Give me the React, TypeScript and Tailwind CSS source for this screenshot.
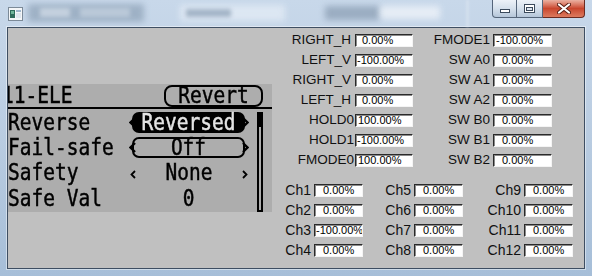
import React from "react";

type Row = { label: string; value: string; lp: string; vp: string };

const col1: Row[] = [
  { label: "RIGHT_H", value: "0.00%", lp: "pr-[3px]", vp: "pl-[6px]" },
  { label: "LEFT_V", value: "-100.00%", lp: "pr-[3px]", vp: "pl-[1px]" },
  { label: "RIGHT_V", value: "0.00%", lp: "pr-[3px]", vp: "pl-[6px]" },
  { label: "LEFT_H", value: "0.00%", lp: "pr-[3px]", vp: "pl-[6px]" },
  { label: "HOLD0", value: "100.00%", lp: "pr-0", vp: "pl-[2px]" },
  { label: "HOLD1", value: "-100.00%", lp: "pr-0", vp: "pl-[1px]" },
  { label: "FMODE0", value: "100.00%", lp: "pr-0", vp: "pl-[2px]" },
];

const col2: Row[] = [
  { label: "FMODE1", value: "-100.00%", lp: "pr-0", vp: "pl-[2px]" },
  { label: "SW A0", value: "0.00%", lp: "pr-0", vp: "pl-[8px]" },
  { label: "SW A1", value: "0.00%", lp: "pr-0", vp: "pl-[8px]" },
  { label: "SW A2", value: "0.00%", lp: "pr-0", vp: "pl-[8px]" },
  { label: "SW B0", value: "0.00%", lp: "pr-0", vp: "pl-[8px]" },
  { label: "SW B1", value: "0.00%", lp: "pr-0", vp: "pl-[8px]" },
  { label: "SW B2", value: "0.00%", lp: "pr-0", vp: "pl-[8px]" },
];

function Box({ value, w, vp }: { value: string; w: string; vp: string }) {
  return (
    <div
      className={`${w} h-[13px] bg-white border border-t-[#2a2a2a] border-l-[#2a2a2a] border-r-[#f4f4f4] border-b-[#f4f4f4] shadow-[inset_1px_1px_0_#8a8a8a] flex items-center ${vp} text-[11px] leading-[11px] text-black font-['Liberation_Sans',Arial,sans-serif] whitespace-pre overflow-hidden`}
    >
      {value}
    </div>
  );
}

function Chev({ dir, size }: { dir: "l" | "r"; size: "big" | "small" }) {
  const big = size === "big";
  const w = big ? 7 : 6;
  const h = big ? 11 : 9;
  const pts =
    dir === "l"
      ? `${w - 1},1 1.5,${h / 2} ${w - 1},${h - 1}`
      : `1,1 ${w - 1.5},${h / 2} 1,${h - 1}`;
  return (
    <svg width={w} height={h} viewBox={`0 0 ${w} ${h}`} className="block">
      <polyline points={pts} fill="none" stroke="#000" strokeWidth={big ? 2.4 : 1.8} />
    </svg>
  );
}

function LcdText({ children, cls = "" }: { children: React.ReactNode; cls?: string }) {
  return <span className={`inline-block scale-y-120 leading-[14px] whitespace-pre ${cls}`}>{children}</span>;
}

export default function App() {
  const bottomCols = [
    { w: "w-[91px]", items: [["Ch1", "0.00%"], ["Ch2", "0.00%"], ["Ch3", "-100.00%"], ["Ch4", "0.00%"]] },
    { w: "w-[100px]", items: [["Ch5", "0.00%"], ["Ch6", "0.00%"], ["Ch7", "0.00%"], ["Ch8", "0.00%"]] },
    { w: "w-[110px]", items: [["Ch9", "0.00%"], ["Ch10", "0.00%"], ["Ch11", "0.00%"], ["Ch12", "0.00%"]] },
  ];

  return (
    <div className="w-[592px] h-[276px] relative overflow-hidden bg-linear-to-b from-[#c8d8ea] via-[#b9cce1] to-[#a6bed8] flex flex-col">
      {/* title bar */}
      <div className="h-[27px] relative shrink-0">
        <div className="absolute left-[28px] top-[4px] w-[116px] h-[18px] bg-[#8ea2b7] opacity-70 blur-[3px]" />
        <div className="absolute left-[40px] top-[8px] w-[30px] h-[9px] bg-[#dfe7f0] opacity-60 blur-[2px]" />
        <div className="absolute left-[80px] top-[8px] w-[50px] h-[9px] bg-[#d7e1ec] opacity-50 blur-[2px]" />
        <div className="absolute left-[180px] top-[5px] w-[105px] h-[16px] bg-[#e2ebf5] opacity-80 blur-[3px]" />
        <div className="absolute left-[186px] top-[9px] w-[45px] h-[8px] bg-[#7f94ab] opacity-60 blur-[2px]" />
        <div className="absolute left-[325px] top-[6px] w-[55px] h-[14px] bg-[#7d91a7] opacity-60 blur-[3px]" />
        <div className="absolute left-[380px] top-[6px] w-[60px] h-[13px] bg-[#eef3f9] opacity-80 blur-[3px]" />
        <div className="absolute left-[466px] top-0 w-[3px] h-[27px] bg-[#dbe5f0] opacity-60 blur-[1px]" />
        <svg width="15" height="14" viewBox="0 0 15 14" className="absolute left-[8px] top-[7px]">
          <rect x="0.5" y="0.5" width="14" height="13" fill="#f4f6f8" stroke="#7c8a98" />
          <rect x="2" y="3" width="5" height="8" fill="#2f6b5c" />
          <rect x="3" y="4" width="3" height="3" fill="#6fb59a" />
          <rect x="8" y="3" width="5" height="2" fill="#9fb6cc" />
          <rect x="8" y="6" width="5" height="5" fill="#dfe6ee" />
        </svg>
        <div className="absolute right-[7px] top-0 h-[18px] flex">
          <div className="w-[25px] h-full border border-t-0 border-[#55657a] rounded-bl-[4px] bg-linear-to-b from-[#edf2f8] via-[#d5e0ec] to-[#b5c6d9] flex items-end justify-center pb-[4px]">
            <div className="w-[10px] h-[4px] bg-white border border-[#3b4a5c]" />
          </div>
          <div className="w-[26px] h-full border border-t-0 border-l-0 border-[#55657a] bg-linear-to-b from-[#edf2f8] via-[#d5e0ec] to-[#b5c6d9] flex items-center justify-center">
            <div className="w-[11px] h-[9px] border border-[#3b4a5c] bg-white p-[1px] pt-[2px]">
              <div className="w-full h-full border border-[#3b4a5c] bg-[#dde6f0]" />
            </div>
          </div>
          <div className="w-[42px] h-full border border-t-0 border-l-0 border-[#6b2a20] rounded-br-[4px] bg-linear-to-b from-[#eab1a2] via-[#c9462e] to-[#dc7a5e] flex items-center justify-center">
            <svg width="14" height="11" viewBox="0 0 14 11">
              <path d="M2 1.5 L12 9.5 M12 1.5 L2 9.5" stroke="#5a1f14" strokeWidth="4" strokeLinecap="round" />
              <path d="M2 1.5 L12 9.5 M12 1.5 L2 9.5" stroke="#ffffff" strokeWidth="2.2" strokeLinecap="round" />
            </svg>
          </div>
        </div>
      </div>

      {/* client area */}
      <div className="px-[7px]">
        <div className="w-[578px] h-[242px] border border-[#3e4e62] shadow-[0_0_0_1px_rgba(255,255,255,0.45)] bg-[#c0c0c0] flex">
          {/* LCD column */}
          <div className="w-[264px] pt-[56px] shrink-0">
            <div className="w-[264px] h-[128px] bg-[#adadad] overflow-hidden flex flex-col text-black font-['DejaVu_Sans_Mono',monospace] text-[19.5px] leading-none [-webkit-text-stroke:0.4px]">
              <div className="h-[25px] border-b-2 border-black flex items-center justify-between shrink-0">
                <div className="ml-[-6px] mt-[1px]">
                  <LcdText>11-ELE</LcdText>
                </div>
                <div className="w-[99px] h-[22px] mr-[9px] self-start mt-[1px] border-2 border-black rounded-[8px] flex items-center justify-center">
                  <LcdText>Revert</LcdText>
                </div>
              </div>
              <div className="flex mt-[1px]">
                <div className="w-[249px] flex flex-col">
                  <div className="h-[25px] flex items-center">
                    <div className="w-[120px]">
                      <LcdText>Reverse</LcdText>
                    </div>
                    <div className="w-[121px] h-full relative flex items-center px-[4px]">
                      <div className="w-full h-[21px] bg-black text-[#e4e4e4] rounded-[7px] flex items-center justify-center">
                        <LcdText>Reversed</LcdText>
                      </div>
                      <div className="absolute left-[1px] top-[7px]">
                        <Chev dir="l" size="big" />
                      </div>
                      <div className="absolute right-0 top-[7px]">
                        <Chev dir="r" size="big" />
                      </div>
                    </div>
                  </div>
                  <div className="h-[25px] flex items-center">
                    <div className="w-[120px]">
                      <LcdText>Fail-safe</LcdText>
                    </div>
                    <div className="w-[121px] h-full relative flex items-center px-[4px]">
                      <div className="w-full h-[21px] border-2 border-black rounded-[7px] flex items-center justify-center">
                        <LcdText>Off</LcdText>
                      </div>
                      <div className="absolute left-[1px] top-[7px]">
                        <Chev dir="l" size="big" />
                      </div>
                      <div className="absolute right-0 top-[7px]">
                        <Chev dir="r" size="big" />
                      </div>
                    </div>
                  </div>
                  <div className="h-[25px] flex items-center">
                    <div className="w-[120px]">
                      <LcdText>Safety</LcdText>
                    </div>
                    <div className="w-[121px] h-full flex items-center justify-between pl-[2px] pr-[1px]">
                      <div className="mt-[3px]">
                        <Chev dir="l" size="small" />
                      </div>
                      <LcdText>None</LcdText>
                      <div className="mt-[3px]">
                        <Chev dir="r" size="small" />
                      </div>
                    </div>
                  </div>
                  <div className="h-[25px] flex items-center pt-[2px]">
                    <div className="w-[120px]">
                      <LcdText>Safe Val</LcdText>
                    </div>
                    <div className="w-[121px] flex items-center justify-center">
                      <LcdText>0</LcdText>
                    </div>
                  </div>
                </div>
                <div className="w-[6px] h-[100px] mt-[2px] border-x-2 border-b-2 border-black flex flex-col">
                  <div className="h-[15px] bg-black" />
                </div>
              </div>
            </div>
          </div>

          {/* right fields */}
          <div className="flex flex-col pt-[2px] font-['Liberation_Sans',Arial,sans-serif] text-[#111]">
            <div className="flex">
              <div className="flex flex-col">
                {col1.map((r) => (
                  <div key={r.label} className="h-[20px] flex items-center">
                    <div className={`w-[82px] text-right text-[13.5px] leading-none ${r.lp}`}>{r.label}</div>
                    <div className="ml-[1px]">
                      <Box value={r.value} w="w-[58px]" vp={r.vp} />
                    </div>
                  </div>
                ))}
              </div>
              <div className="flex flex-col">
                {col2.map((r) => (
                  <div key={r.label} className="h-[20px] flex items-center">
                    <div className="w-[77px] text-right text-[13.5px] leading-none whitespace-pre">{r.label}</div>
                    <div className="ml-[3px]">
                      <Box value={r.value} w="w-[59px]" vp={r.vp} />
                    </div>
                  </div>
                ))}
              </div>
            </div>
            <div className="flex mt-[10px]">
              {bottomCols.map((c, ci) => (
                <div key={ci} className={`${c.w} flex flex-col`}>
                  {c.items.map(([l, v]) => (
                    <div key={l} className="h-[20px] flex items-center justify-end gap-[3px]">
                      <div className="text-[14px] leading-none">{l}</div>
                      <Box value={v} w="w-[49px]" vp={v.startsWith("-") ? "pl-[1px]" : "pl-[8px]"} />
                    </div>
                  ))}
                </div>
              ))}
            </div>
          </div>
        </div>
      </div>
    </div>
  );
}
